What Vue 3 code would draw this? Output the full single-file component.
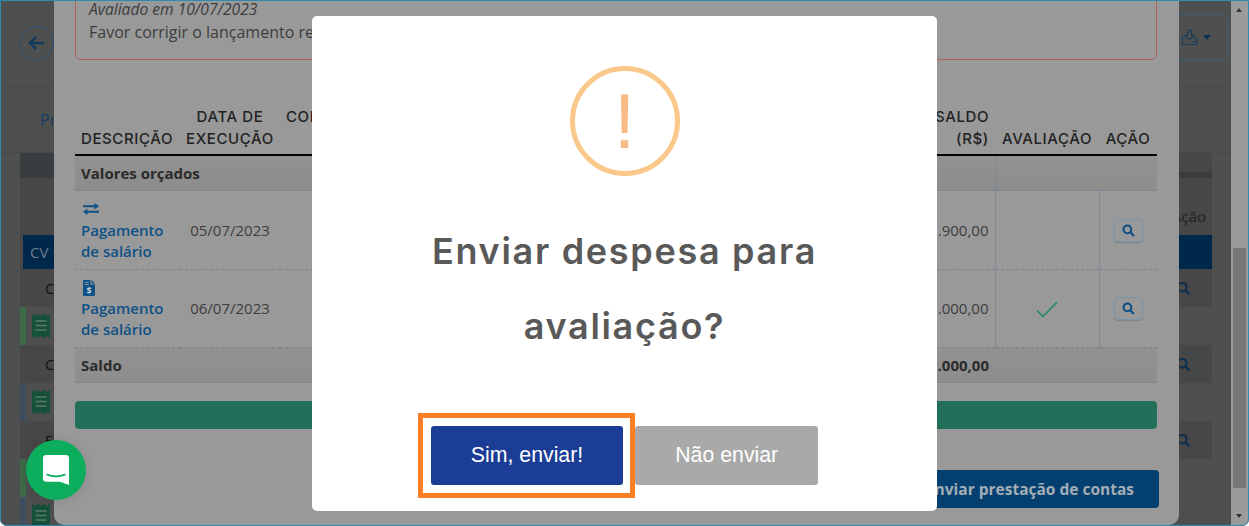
<script setup>
const backRows = [
  { type: 'text', letter: 'C', search: true },
  { type: 'strip', tone: 'green' },
  { type: 'text', letter: 'C', search: true },
  { type: 'strip', tone: 'blue' },
  { type: 'text', letter: 'E', search: true },
  { type: 'strip', tone: 'green' },
  { type: 'strip', tone: 'blue' },
];
</script>

<template>
  <div class="page">
    <!-- pagina por tras do dialogo -->
    <div class="back">
      <header class="back-header">
        <button class="back-btn" aria-label="Voltar">
          <svg width="18" height="16" viewBox="0 0 18 16"><path d="M8 2 2 8l6 6M2.5 8H16" fill="none" stroke="#143a5c" stroke-width="2.6"/></svg>
        </button>
        <button class="export-btn" aria-label="Exportar">
          <svg width="17" height="17" viewBox="0 0 18 17" fill="none" stroke="#12395a" stroke-width="1.1">
            <path d="M7 .8h4v5.4h2.8L9 10.8 4.2 6.2H7z"/>
            <path d="M4 9H1.2v7h15.6V9H14"/>
            <path d="M12 13h3"/>
          </svg>
          <span class="caret"></span>
        </button>
      </header>
      <nav class="back-tabs"><span class="tab">Prestação de contas</span></nav>
      <section class="back-card">
        <div class="card-head"></div>
        <div class="card-title">Ação</div>
        <div class="card-bar">CV</div>
        <div v-for="(row, i) in backRows" :key="i" class="back-row" :class="row.type">
          <template v-if="row.type === 'text'">
            <span class="letter">{{ row.letter }}</span>
            <span class="mini-search">
              <svg width="15" height="15" viewBox="0 0 15 15" fill="none" stroke="#0d2f4d" stroke-width="2.2"><circle cx="6.2" cy="6.2" r="4.4"/><path d="m9.6 9.6 4.2 4.2"/></svg>
            </span>
          </template>
          <template v-else>
            <span class="tone" :class="row.tone"></span>
            <svg class="receipt" width="18" height="24" viewBox="0 0 18 24">
              <path d="M0 0l3 2 3-2 3 2 3-2 3 2 3-2v24l-3-2-3 2-3-2-3 2-3-2-3 2z" fill="#14503a"/>
              <path d="M3.5 7h11M3.5 11.5h11M3.5 16h11" stroke="#5b7a68" stroke-width="1.4"/>
            </svg>
          </template>
        </div>
      </section>
    </div>

    <div class="scrollbar">
      <span class="arrow up"></span>
      <span class="thumb"></span>
      <span class="arrow down"></span>
    </div>

    <!-- dialogo de detalhes -->
    <div class="dialog">
      <div class="notice">
        <em>Avaliado em 10/07/2023</em>
        <p>Favor corrigir o lançamento realizado</p>
      </div>

      <table class="items">
        <colgroup>
          <col class="c-desc" /><col class="c-date" /><col /><col class="c-saldo" /><col class="c-aval" /><col class="c-acao" />
        </colgroup>
        <thead>
          <tr>
            <th class="left">DESCRIÇÃO</th>
            <th>DATA DE<br />EXECUÇÃO</th>
            <th class="left top">CONTA</th>
            <th class="right">SALDO<br />(R$)</th>
            <th>AVALIAÇÃO</th>
            <th>AÇÃO</th>
          </tr>
        </thead>
        <tbody>
          <tr class="band">
            <td colspan="4">Valores orçados</td>
            <td colspan="2" class="line-left"></td>
          </tr>
          <tr class="item">
            <td>
              <span class="kind-box">
                <svg width="16" height="12" viewBox="0 0 16 12" fill="#0d5186"><path d="M0 2.2h11.5V0L16 3.2l-4.5 3.2V4.2H0zM16 7.8H4.5V5.6L0 8.8 4.500 12V9.800H16z"/></svg>
              </span>
              <a class="link">Pagamento de salário</a>
            </td>
            <td class="center">05/07/2023</td>
            <td></td>
            <td class="right">1.900,00</td>
            <td class="line-left"></td>
            <td class="line-left center">
              <span class="search">
                <svg width="13" height="13" viewBox="0 0 15 15" fill="none" stroke="#0b4f86" stroke-width="2.4"><circle cx="6.2" cy="6.2" r="4.5"/><path d="m9.6 9.6 4.2 4.2"/></svg>
              </span>
            </td>
          </tr>
          <tr class="item short">
            <td>
              <span class="kind-box">
                <svg width="12" height="16" viewBox="0 0 12 16">
                  <path d="M0 1.200C0 .5.500 0 1.200 0H7.500v4.500H12v10.300c0 .7-.5 1.200-1.200 1.200H1.200C.5 16 0 15.500 0 14.800z" fill="#0d5186"/>
                  <path d="M8.600 0 12 3.400H8.600z" fill="#0d5186"/>
                  <path d="M1.800 2.400h4M1.800 4.600h4" stroke="#999" stroke-width="1"/>
                  <text x="6" y="14" font-size="9" font-weight="700" text-anchor="middle" fill="#c8d2da" font-family="'Open Sans', sans-serif">$</text>
                </svg>
              </span>
              <a class="link">Pagamento de salário</a>
            </td>
            <td class="center">06/07/2023</td>
            <td></td>
            <td class="right">1.000,00</td>
            <td class="line-left center">
              <svg class="check" width="22" height="17" viewBox="0 0 22 17" fill="none" stroke="#2a8a68" stroke-width="1.7"><path d="m1 9.5 6 6L21 1"/></svg>
            </td>
            <td class="line-left center">
              <span class="search">
                <svg width="13" height="13" viewBox="0 0 15 15" fill="none" stroke="#0b4f86" stroke-width="2.4"><circle cx="6.2" cy="6.2" r="4.5"/><path d="m9.6 9.6 4.2 4.2"/></svg>
              </span>
            </td>
          </tr>
          <tr class="band total">
            <td colspan="3">Saldo</td>
            <td class="right">1.000,00</td>
            <td colspan="2"></td>
          </tr>
        </tbody>
      </table>

      <div class="green-bar"></div>
      <div class="dialog-actions">
        <button class="send-btn">Enviar prestação de contas</button>
      </div>
    </div>

    <!-- alerta de confirmacao -->
    <div class="alert">
      <div class="alert-icon">!</div>
      <h2 class="alert-title">Enviar despesa para avaliação?</h2>
      <div class="alert-actions">
        <button class="btn confirm">
          Sim, enviar!
          <span class="highlight"></span>
        </button>
        <button class="btn cancel">Não enviar</button>
      </div>
    </div>

    <!-- chat -->
    <div class="chat">
      <svg width="26" height="30" viewBox="0 0 26 30">
        <path d="M3 0h20c1.700 0 3 1.300 3 3v27l-9-3.300H3c-1.700 0-3-1.300-3-3V3C0 1.300 1.300 0 3 0z" fill="#fff"/>
        <path d="M4 19.500c5 2.500 13 2.500 18 0" fill="none" stroke="#0cae5e" stroke-width="1.600" stroke-linecap="round"/>
      </svg>
    </div>

    <div class="frame"></div>
  </div>
</template>

<style scoped>
.page {
  position: relative;
  width: 1249px;
  height: 526px;
  overflow: hidden;
  background: #4e5050;
  font-family: "Open Sans", sans-serif;
  color: #2b2b2b;
  border-radius: 0 0 7px 7px;
}

.frame {
  position: absolute;
  inset: 0;
  border: 1px solid #2e8cae;
  border-radius: 0 0 7px 7px;
  pointer-events: none;
}

/* fundo */
.back {
  width: 1231px;
  height: 526px;
}

.back-header {
  height: 87px;
  box-sizing: border-box;
  border-bottom: 1px solid #484a4a;
  display: flex;
  justify-content: space-between;
  align-items: flex-start;
  padding: 14px 3px 0 20px;
}

.back-btn {
  width: 34px;
  height: 34px;
  margin-top: 12px;
  padding: 0;
  background: none;
  border: 1px solid #2b5272;
  border-radius: 50%;
  display: flex;
  align-items: center;
  justify-content: center;
}

.export-btn {
  width: 58px;
  height: 46px;
  padding: 0 0 0 10px;
  background: none;
  border: 1px solid #3d6076;
  border-radius: 6px;
  display: flex;
  align-items: center;
  gap: 5px;
}

.caret {
  border-left: 4.5px solid transparent;
  border-right: 4.5px solid transparent;
  border-top: 5px solid #0d2f4d;
}

.back-tabs {
  height: 66px;
  box-sizing: border-box;
  padding: 22px 0 0 40px;
  border-bottom: 1px solid #484a4a;
  font-size: 16px;
  color: #173f63;
}

.back-card {
  width: 1192px;
  margin-left: 20px;
  background: #474747;
}

.card-head {
  height: 25px;
  background:
    linear-gradient(#3a3d40, #3a3d40) left / 50% 100% no-repeat,
    linear-gradient(#3a3d40, #3a3d40) bottom / 100% 6px no-repeat;
}

.card-title {
  height: 57px;
  box-sizing: border-box;
  padding: 27px 6px 0 0;
  text-align: right;
  font-size: 15px;
  line-height: 22px;
  color: #222;
}

.card-bar {
  height: 34px;
  margin-left: 3px;
  padding-left: 7px;
  line-height: 34px;
  font-size: 15px;
  color: #6d7f8d;
  background: #00284a;
}

.back-row {
  height: 38px;
  display: flex;
  align-items: center;
}

.letter {
  margin-left: 25px;
  font-size: 15px;
  color: #111;
}

.mini-search {
  margin-left: auto;
  margin-right: 12px;
  width: 32px;
  height: 22px;
  display: flex;
  align-items: center;
  justify-content: center;
  border: 1px solid #3e4a52;
  border-radius: 4px;
}

.back-row.strip {
  background: #4e4e4e;
}

.tone {
  width: 6px;
  height: 100%;
}

.tone.green {
  background: #3c6b48;
}

.tone.blue {
  background: #3e4e60;
}

.receipt {
  margin-left: 6px;
}

/* barra de rolagem */
.scrollbar {
  position: absolute;
  top: 0;
  right: 0;
  width: 18px;
  height: 526px;
  background: #9b9b9b;
}

.thumb {
  position: absolute;
  top: 248px;
  left: 2px;
  width: 13px;
  height: 240px;
  background: #777;
}

.arrow {
  position: absolute;
  left: 5px;
  border-left: 3.5px solid transparent;
  border-right: 3.5px solid transparent;
}

.arrow.up {
  top: 8px;
  border-bottom: 4px solid #333;
}

.arrow.down {
  bottom: 8px;
  border-top: 4px solid #333;
}

/* dialogo */
.dialog {
  position: absolute;
  top: 0;
  left: 54px;
  width: 1125px;
  height: 525px;
  box-sizing: border-box;
  padding: 0 22px 0 21px;
  background: #999;
  border-radius: 0 0 10px 10px;
  overflow: hidden;
}

.notice {
  height: 61px;
  box-sizing: border-box;
  margin-top: -1px;
  padding: 0 13px;
  border: 1px solid #b06060;
  border-radius: 0 0 6px 6px;
  font-size: 16px;
  line-height: 22px;
  color: #3d3d3d;
}

.notice em {
  display: block;
  font-size: 15.6px;
  line-height: 19px;
}

.notice p {
  margin: 2px 0 0;
}

.items {
  width: 1082px;
  margin-top: 46px;
  border-collapse: collapse;
  table-layout: fixed;
  font-size: 15px;
  line-height: 21px;
  color: #3d3d3d;
}

.c-desc { width: 105px; }
.c-date { width: 100px; }
.c-saldo { width: 130px; }
.c-aval { width: 104px; }
.c-acao { width: 58px; }

.items th {
  padding: 0 6px 4px;
  font-family: Inter, sans-serif;
  font-weight: 500;
  font-size: 15px;
  line-height: 22px;
  letter-spacing: 0.6px;
  color: #222;
  text-align: center;
  vertical-align: bottom;
  border-bottom: 2px solid #000;
  white-space: nowrap;
}

.items th.left,
.band td {
  text-align: left;
}

.items th.top {
  padding-bottom: 26px;
}

.items td {
  padding: 0 6px;
  vertical-align: middle;
}

.items .right {
  text-align: right;
}

.items .center {
  text-align: center;
}

.band td {
  height: 34px;
  font-weight: 700;
  color: #2b2b2b;
  background: linear-gradient(#929292, #8c8c8c);
  border-bottom: 1px solid #7d8894;
}

.item td {
  height: 78px;
  border-bottom: 1px dashed #7d8488;
}

.item.short td {
  height: 77px;
}

.items .line-left {
  border-left: 1px solid #7d8894;
}

.kind-box {
  display: flex;
  align-items: center;
  height: 21px;
  margin-left: 2px;
}

.link {
  display: block;
  font-weight: 600;
  color: #0d5186;
}

.search {
  display: inline-flex;
  width: 29px;
  height: 23px;
  align-items: center;
  justify-content: center;
  box-sizing: border-box;
  border: 1px solid #7795ab;
  border-radius: 4px;
  box-shadow: 0 1px 1px rgba(0, 0, 0, 0.15);
  vertical-align: middle;
}

.check {
  vertical-align: middle;
}

.green-bar {
  width: 1082px;
  height: 28px;
  margin-top: 18px;
  background: #23705a;
  border-radius: 4px;
}

.dialog-actions {
  display: flex;
  justify-content: flex-end;
  margin: 41px -2px 0 0;
}

.send-btn {
  height: 38px;
  padding: 0 25px;
  border: 0;
  border-radius: 4px;
  background: #034070;
  color: #a3adb5;
  font-family: "Open Sans", sans-serif;
  font-weight: 700;
  font-size: 15.5px;
}

/* alerta */
.alert {
  position: absolute;
  top: 16px;
  left: 312px;
  width: 625px;
  height: 495px;
  box-sizing: border-box;
  padding-top: 50px;
  background: #fff;
  border-radius: 5px;
  display: flex;
  flex-direction: column;
  align-items: center;
}

.alert-icon {
  width: 110px;
  height: 110px;
  box-sizing: border-box;
  border: 5px solid #fac88a;
  border-radius: 50%;
  font-family: "Liberation Sans", sans-serif;
  font-size: 78px;
  line-height: 100px;
  text-align: center;
  color: #f8bb86;
}

.alert-title {
  width: 440px;
  margin: 38px 0 0;
  font-family: Inter, sans-serif;
  font-weight: 600;
  font-size: 36px;
  letter-spacing: 1.7px;
  line-height: 75px;
  text-align: center;
  color: #595959;
}

.alert-actions {
  display: flex;
  gap: 12px;
  margin-top: 62px;
}

.btn {
  position: relative;
  height: 59px;
  padding: 0 40px;
  border: 0;
  border-radius: 3px;
  color: #fff;
  font-family: "Liberation Sans", sans-serif;
  font-size: 21.3px;
}

.confirm {
  background: #1c3d96;
}

.cancel {
  background: #a9a9a9;
}

.highlight {
  position: absolute;
  inset: -13px -12px -13px -13px;
  border: 5px solid #ff7f27;
}

/* chat */
.chat {
  position: absolute;
  left: 26px;
  top: 440px;
  width: 60px;
  height: 60px;
  border-radius: 50%;
  background: #0cae5e;
  box-shadow: 0 1px 12px rgba(0, 0, 0, 0.1);
  display: flex;
  align-items: center;
  justify-content: center;
}
</style>

<style>
html, body {
  margin: 0;
  background: #fff;
  overflow: hidden;
}
</style>
